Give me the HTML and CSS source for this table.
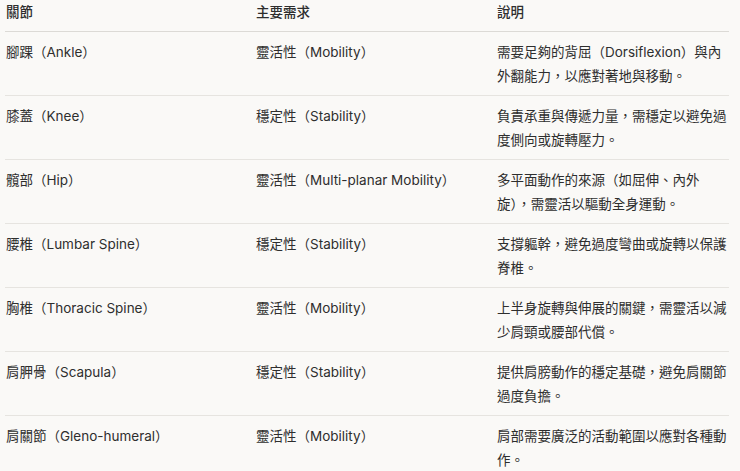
FILE: index.html
```html
<!DOCTYPE html>
<html lang="zh-TW">
<head>
<meta charset="utf-8">
<link rel="stylesheet" href="styles.css">
</head>
<body>
<table class="joints">
  <colgroup>
    <col class="c1"><col class="c2"><col class="c3">
  </colgroup>
  <thead>
    <tr><th>關節</th><th>主要需求</th><th>說明</th></tr>
  </thead>
  <tbody>
    <tr><td>腳踝（Ankle）</td><td>靈活性（Mobility）</td><td>需要足夠的背屈（Dorsiflexion）與內外翻能力，以應對著地與移動。</td></tr>
    <tr><td>膝蓋（Knee）</td><td>穩定性（Stability）</td><td>負責承重與傳遞力量，需穩定以避免過度側向或旋轉壓力。</td></tr>
    <tr><td>髖部（Hip）</td><td>靈活性（Multi-planar Mobility）</td><td>多平面動作的來源（如屈伸、內外旋），需靈活以驅動全身運動。</td></tr>
    <tr><td>腰椎（Lumbar Spine）</td><td>穩定性（Stability）</td><td>支撐軀幹，避免過度彎曲或旋轉以保護脊椎。</td></tr>
    <tr><td>胸椎（Thoracic Spine）</td><td>靈活性（Mobility）</td><td>上半身旋轉與伸展的關鍵，需靈活以減少肩頸或腰部代償。</td></tr>
    <tr><td>肩胛骨（Scapula）</td><td>穩定性（Stability）</td><td>提供肩膀動作的穩定基礎，避免肩關節過度負擔。</td></tr>
    <tr><td>肩關節（Gleno-humeral）</td><td>靈活性（Mobility）</td><td>肩部需要廣泛的活動範圍以應對各種動作。</td></tr>
  </tbody>
</table>
</body>
</html>
```

FILE: styles.css
```css
html, body {
  margin: 0;
  padding: 0;
  background: #faf9f7;
}
body {
  padding: 0 11px 0 5px;
  font-family: "Inter", "Noto Sans CJK TC", sans-serif;
  font-size: 13.5px;
  color: #2e2e2e;
}
.joints {
  width: 724px;
  border-collapse: collapse;
  table-layout: fixed;
}
.c1 { width: 250px; }
.c2 { width: 241px; }
.c3 { width: 233px; }
.joints th {
  text-align: left;
  font-weight: 500;
  line-height: 24px;
  padding: 0 0 7px 1px;
  border-bottom: 1px solid #dcdad6;
}
.joints td {
  vertical-align: top;
  line-height: 24px;
  padding: 8px 0 7px 1px;
  border-bottom: 1px solid #e6e4e0;
}
```
